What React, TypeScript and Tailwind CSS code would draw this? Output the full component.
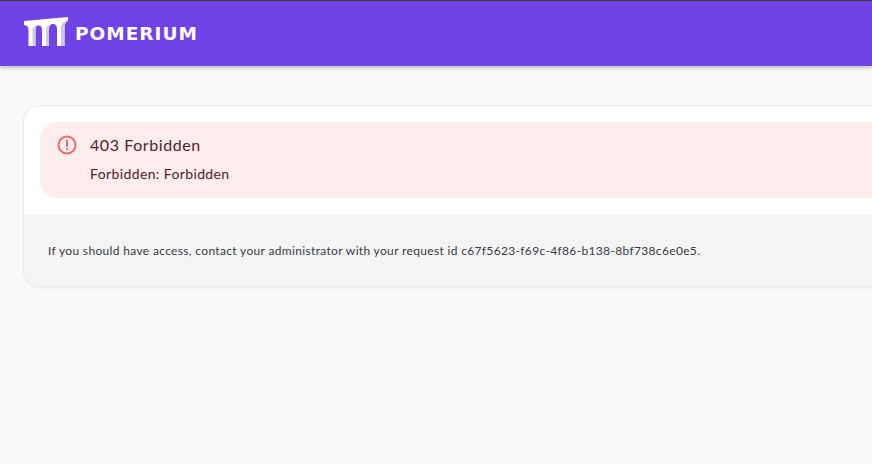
const Logo = () => (
  <svg width="46" height="30" viewBox="0 0 46 30" className="mb-[3px] block">
    <path d="M0 4 L44 0 L44 3.500 C42 4.500 40.500 7 40.500 10 L40.500 29 L33 29 L33 12 C33 8.500 31.500 7 29 7 C26.500 7 25 8.500 25 12 L25 29 L18 29 L18 13.500 C18 9.500 16.500 8.500 14.500 8.500 C12.500 8.500 11.500 9.500 11.500 13.500 L11.500 29 L4.500 29 L4.500 13 C4.500 10 3 8.500 0 8 Z" fill="#ffffff" />
    <path d="M8.500 29 L8.500 12 C9.500 10 11.500 8.800 12.500 8.800 C11.800 9.800 11.500 11 11.500 13.500 L11.500 29 Z M22 29 L22 11 C23 9 25.500 7.600 26.500 7.600 C25.500 8.500 25 10 25 12 L25 29 Z M37 29 L37 9 C38 6 41 4 44 3.500 C42 4.500 40.500 7 40.500 10 L40.500 29 Z" fill="#cfcbe0" />
  </svg>
);

const AlertIcon = () => (
  <svg width="20" height="20" viewBox="0 0 20 20" fill="none" className="block">
    <circle cx="10" cy="10" r="8.500" stroke="#f26a6f" strokeWidth="2" />
    <path d="M10 5.500 L10 11" stroke="#f26a6f" strokeWidth="2" strokeLinecap="round" />
    <circle cx="10" cy="14" r="1.200" fill="#f26a6f" />
  </svg>
);

export default function App() {
  return (
    <div className="h-[464px] w-[872px] overflow-hidden bg-[#fafafa] font-['Lato',sans-serif]">
      <header className="flex h-[66px] items-center gap-[5px] border-t border-[#3a3a3a] bg-[#6f43e7] pl-6 shadow-[0_2px_4px_rgba(0,0,0,0.25)]">
        <Logo />
        <span className="mt-[1px] font-['DejaVu_Sans',sans-serif] text-[18.5px] font-bold tracking-[1px] text-white">
          POMERIUM
        </span>
      </header>
      <main className="pt-[39px] pl-[23px]">
        <div className="w-[1000px] overflow-hidden rounded-[16px] border border-[#ececec] bg-white shadow-[0_1px_2px_rgba(0,0,0,0.08)]">
          <div className="p-4">
            <div className="flex h-[76px] gap-[13px] rounded-[16px] bg-[#fdeded] py-[13px] pl-[17px]">
              <AlertIcon />
              <div className="text-[#54202c]">
                <p className="text-[16px] leading-5 tracking-[0.58px]">403 Forbidden</p>
                <p className="mt-[10px] text-[14px] leading-[18px] tracking-[0.38px]">Forbidden: Forbidden</p>
              </div>
            </div>
          </div>
          <div className="flex h-[72px] items-center bg-[#f4f4f4] pt-[2px] pl-6 text-[12px] tracking-[0.336px] text-[#3a3a48]">
            If you should have access, contact your administrator with your request id c67f5623-f69c-4f86-b138-8bf738c6e0e5.
          </div>
        </div>
      </main>
    </div>
  );
}
